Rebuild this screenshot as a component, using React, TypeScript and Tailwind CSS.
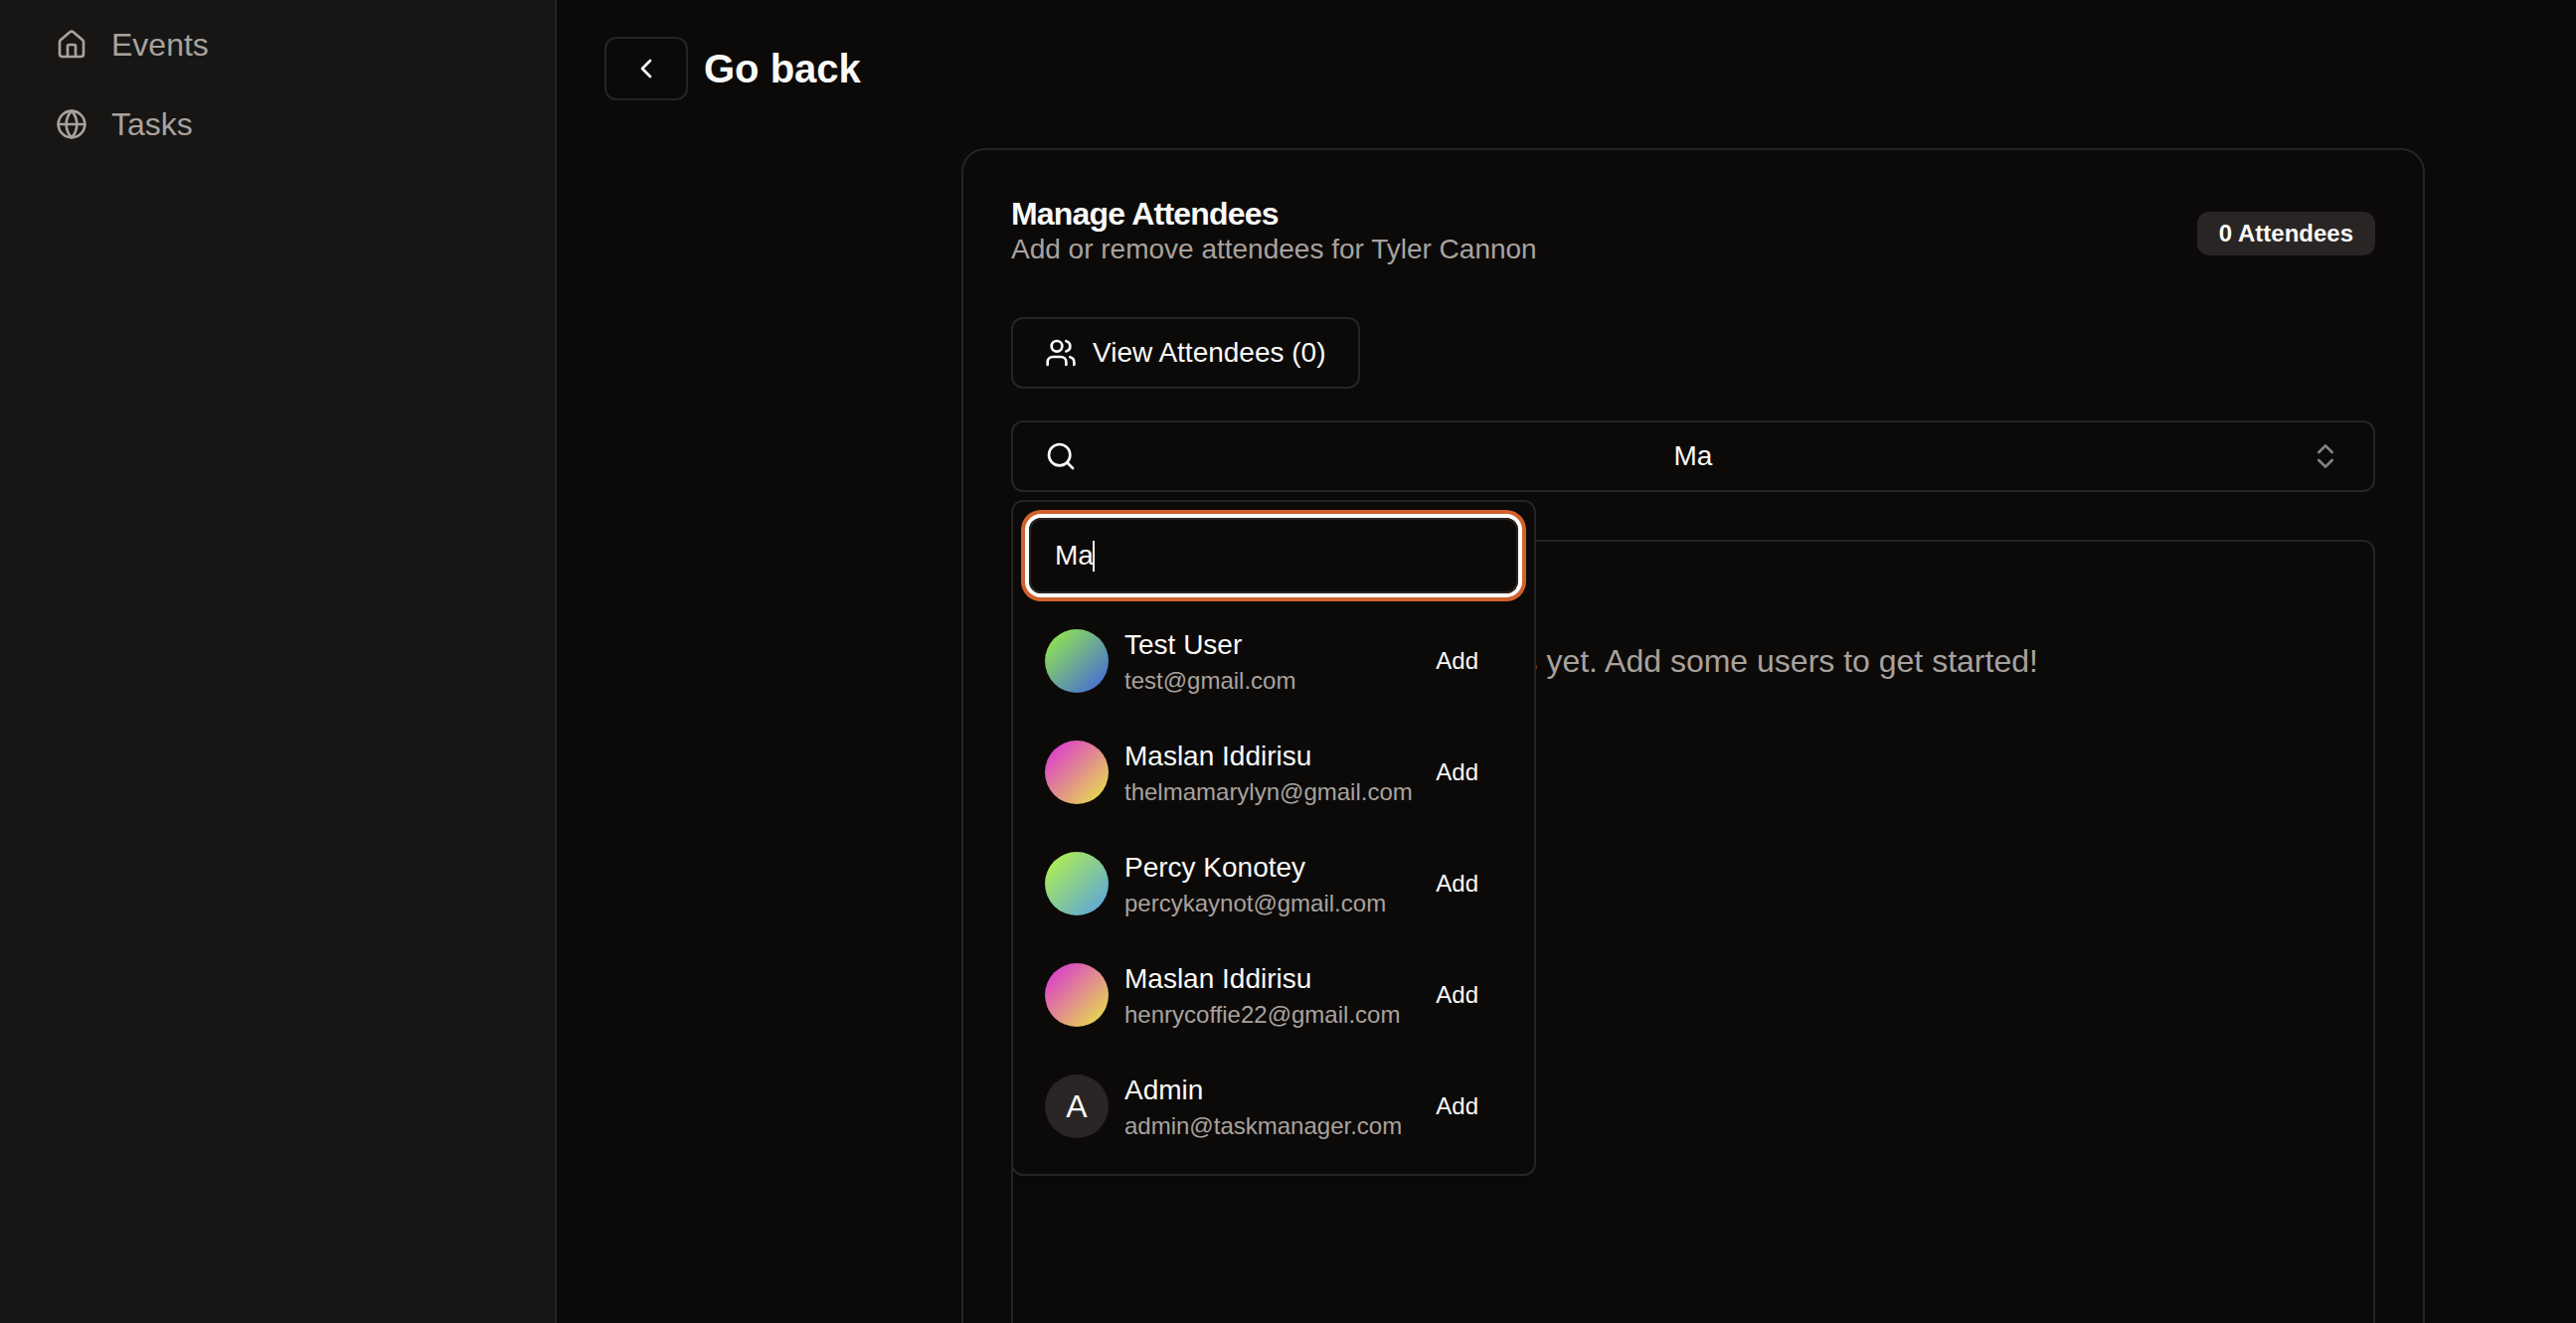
import { ChevronLeft, ChevronsUpDown, Globe, House, Search, Users } from "lucide-react";

const nav = [
  { label: "Events", icon: House },
  { label: "Tasks", icon: Globe },
];

const users = [
  { name: "Test User", email: "test@gmail.com", avatar: "bg-linear-to-br/srgb from-[#9af142] to-[#3e60e4]" },
  { name: "Maslan Iddirisu", email: "thelmamarylyn@gmail.com", avatar: "bg-linear-to-br/srgb from-[#d92cdc] to-[#e8ec40]" },
  { name: "Percy Konotey", email: "percykaynot@gmail.com", avatar: "bg-linear-to-br/srgb from-[#b9f644] to-[#549fe8]" },
  { name: "Maslan Iddirisu", email: "henrycoffie22@gmail.com", avatar: "bg-linear-to-br/srgb from-[#d92cdc] to-[#e8ec40]" },
  { name: "Admin", email: "admin@taskmanager.com", avatar: "bg-[#292524]", initial: "A" },
];

function Sidebar() {
  return (
    <aside className="w-[560px] shrink-0 border-r-2 border-[#272524] bg-[#171614] px-14 pt-[5px]">
      {nav.map(({ label, icon: Icon }) => (
        <a key={label} className="flex h-20 items-center gap-6 text-[32px] leading-[48px] text-[#a8a29e]">
          <Icon className="size-8" />
          {label}
        </a>
      ))}
    </aside>
  );
}

function UserPopover() {
  return (
    <div className="absolute top-20 left-0 z-10 h-[680px] w-[528px] rounded-xl border-2 border-[#272524] bg-[#0c0a09] p-4 shadow-md">
      <div className="flex h-[76px] items-center rounded-xl border-2 border-[#272524] px-6 text-[28px] shadow-[0_0_0_4px_#ffffff,0_0_0_8px_#d0622d]">
        <span>Ma</span>
        <span className="-ml-px h-[31px] w-0.5 bg-[#fafaf9]" />
      </div>
      <ul className="mt-3">
        {users.map((user) => (
          <li key={user.email} className="flex h-28 items-center gap-4 px-4">
            <div className={`flex size-16 shrink-0 items-center justify-center rounded-full text-[32px] ${user.avatar}`}>
              {user.initial}
            </div>
            <div className="flex-1">
              <p className="text-[28px] leading-10">{user.name}</p>
              <p className="text-2xl leading-8 text-[#a8a29e]">{user.email}</p>
            </div>
            <button className="mr-6 text-2xl">Add</button>
          </li>
        ))}
      </ul>
    </div>
  );
}

export default function App() {
  return (
    <div className="flex h-[1331px] overflow-hidden bg-[#0c0a09] font-['Liberation_Sans',Arial,sans-serif] text-[#fafaf9]">
      <Sidebar />
      <main className="flex-1 px-12 pt-[37px]">
        <div className="flex items-center gap-4">
          <button className="flex h-16 w-21 items-center justify-center rounded-xl border-2 border-[#272524]">
            <ChevronLeft className="size-8" />
          </button>
          <h1 className="text-[40px] leading-[56px] font-bold">Go back</h1>
        </div>

        <section className="mt-12 ml-[359px] h-[1400px] w-[1472px] rounded-3xl border-2 border-[#272524] p-12">
          <header className="flex items-center justify-between">
            <div>
              <h2 className="text-[32px] leading-8 font-bold tracking-tight">Manage Attendees</h2>
              <p className="text-[28px] leading-10 text-[#a8a29e]">Add or remove attendees for Tyler Cannon</p>
            </div>
            <span className="flex h-11 items-center rounded-xl bg-[#292524] px-[22px] text-2xl font-bold">0 Attendees</span>
          </header>

          <button className="mt-12 flex h-18 items-center gap-4 rounded-xl border-2 border-[#272524] px-8 text-[28px]">
            <Users className="size-8" />
            View Attendees (0)
          </button>

          <div className="relative mt-8">
            <button className="flex h-18 w-full items-center justify-between rounded-xl border-2 border-[#272524] px-8 text-[28px]">
              <Search className="size-8" />
              Ma
              <ChevronsUpDown className="size-8 opacity-50" />
            </button>
            <UserPopover />
          </div>

          <div className="mt-12 h-[1000px] rounded-xl border-2 border-[#272524] pt-24 text-center">
            <p className="text-[32px] leading-[48px] text-[#a8a29e]">No attendees yet. Add some users to get started!</p>
          </div>
        </section>
      </main>
    </div>
  );
}
